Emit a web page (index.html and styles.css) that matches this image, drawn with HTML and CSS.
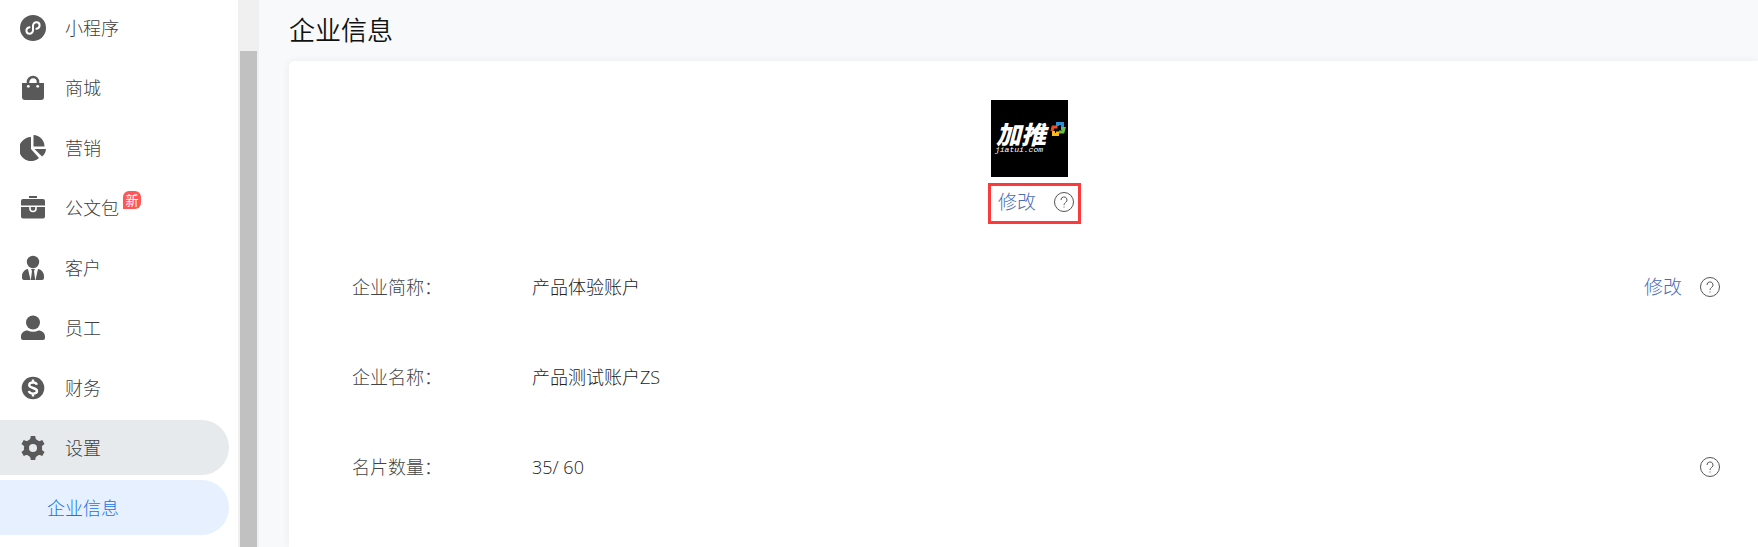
FILE: index.html
```
<!DOCTYPE html>
<html lang="zh-CN">
<head>
    <meta charset="UTF-8">
    <meta name="viewport" content="width=device-width, initial-scale=1.0">
    <title>企业信息</title>
    <link rel="stylesheet" href="styles.css">
</head>
<body>
    <div class="page">
        <nav class="sidebar">
            <a href="#" class="item">
                <svg class="icon" viewBox="0 0 26 26"><circle cx="13" cy="13" r="13" fill="#595959"/><path d="M9.600 12.200c-2.200 .4-3.200 1.800-3.200 3.300 0 1.800 1.400 3.200 3.200 3.200s3.400-1.400 3.400-3.400v-4.600c0-2 1.600-3.400 3.400-3.400s3.200 1.400 3.200 3.100c0 1.600-1 2.900-3.200 3.300" fill="none" stroke="#fff" stroke-width="2" stroke-linecap="round"/></svg>
                <span>小程序</span>
            </a>
            <a href="#" class="item">
                <svg class="icon" viewBox="0 0 26 26"><path d="M2 8h22v14a3 3 0 0 1-3 3H5a3 3 0 0 1-3-3z" fill="#595959"/><path d="M8 9V7a5 5 0 0 1 10 0v2" fill="none" stroke="#595959" stroke-width="2.600"/><circle cx="8.300" cy="11.300" r="1.400" fill="#fff"/><circle cx="17.700" cy="11.300" r="1.400" fill="#fff"/></svg>
                <span>商城</span>
            </a>
            <a href="#" class="item">
                <svg class="icon" viewBox="0 0 26 26" fill="#595959"><path d="M11 2v12l8 9A12 12 0 1 1 11 2z"/><path d="M13.500 0A11.500 11.500 0 0 1 24.500 11.500h-11z"/><path d="M14.500 14H26c-.3 3-1.500 5.500-4 7.500z"/></svg>
                <span>营销</span>
            </a>
            <a href="#" class="item">
                <svg class="icon" viewBox="0 0 26 26" fill="#595959"><path d="M9 1h8v2H9z"/><path d="M3 4h20a2 2 0 0 1 2 2v4.500H1V6a2 2 0 0 1 2-2z"/><path d="M1 12h24v9.500a2 2 0 0 1-2 2H3a2 2 0 0 1-2-2z"/><path d="M10 12v1.500a3 3 0 0 0 6 0V12" fill="none" stroke="#fff" stroke-width="1.600"/></svg>
                <span>公文包</span>
                <span class="badge">新</span>
            </a>
            <a href="#" class="item">
                <svg class="icon" viewBox="0 0 26 26" fill="#595959"><circle cx="13" cy="7" r="6.200"/><path d="M8 14l2.500 11H4a2 2 0 0 1-2-2v-2c0-3.500 2.500-6.500 6-7zM18 14l-2.500 11H22a2 2 0 0 0 2-2v-2c0-3.500-2.500-6.500-6-7z"/><path d="M11 14h4l-1 2 1.200 9h-4.400l1.200-9z"/></svg>
                <span>客户</span>
            </a>
            <a href="#" class="item">
                <svg class="icon" viewBox="0 0 26 26" fill="#595959"><circle cx="13" cy="7.500" r="7"/><path d="M7.500 15.500c3.500 1.600 7.500 1.600 11 0 3.500 0 6.500 2.500 6.500 6V23a2 2 0 0 1-2 2H3a2 2 0 0 1-2-2v-1.500c0-3.500 3-6 6.500-6z"/></svg>
                <span>员工</span>
            </a>
            <a href="#" class="item">
                <svg class="icon" viewBox="0 0 26 26"><circle cx="13" cy="13" r="11.300" fill="#595959"/><path d="M16.800 9.800c-.4-1.500-1.800-2.300-3.800-2.300-2.200 0-3.800 1-3.800 2.600 0 1.700 1.600 2.300 3.800 2.900s4 1.200 4 3-1.700 2.600-4 2.600c-2.200 0-3.700-.9-4.200-2.600M13 4.500v3M13 18.500v3" fill="none" stroke="#fff" stroke-width="2.400"/></svg>
                <span>财务</span>
            </a>
            <a href="#" class="item current">
                <svg class="icon" viewBox="0 0 26 26"><g fill="#595959"><circle cx="13" cy="13" r="9.200"/><path id="tooth" d="M10 5l.8-4h4.400L16 5v16l-.8 4h-4.400L10 21z"/><use href="#tooth" transform="rotate(60 13 13)"/><use href="#tooth" transform="rotate(120 13 13)"/></g><circle cx="13" cy="13" r="4" fill="#e6eaed"/></svg>
                <span>设置</span>
            </a>
            <a href="#" class="item sub">企业信息</a>
        </nav>
        <div class="scrollbar"><div class="thumb"></div></div>
        <main class="content">
            <h1>企业信息</h1>
            <section class="card">
                <div class="brand">
                    <svg class="logo" viewBox="0 0 77 77">
                        <rect width="77" height="77"/>
                        <text class="logo-name" x="5" y="44">加推</text>
                        <text class="logo-url" x="4" y="52">jiatui.com</text>
                        <g fill="none" stroke-width="3">
                            <path d="M66.500 26v-2.500h5V27" stroke="#2a93d5"/>
                            <path d="M70 28.500h3l-1 3.500h-4" stroke="#6abf4b"/>
                            <path d="M66.500 31.500v3h-4V31" stroke="#f9b91a"/>
                            <path d="M61 31l1-4h4.500" stroke="#e9502a"/>
                        </g>
                    </svg>
                    <div class="edit framed">
                        <a href="#">修改</a>
                        <button class="help" aria-label="帮助"><svg viewBox="0 0 20 20"><circle cx="10" cy="10" r="9.500"/><path d="M7 8a3 3 0 1 1 4.500 2.500Q10 11.500 10 13M10 14.500v1"/></svg></button>
                    </div>
                </div>
                <dl class="info">
                    <div class="row">
                        <dt>企业简称：</dt>
                        <dd>产品体验账户</dd>
                        <div class="edit">
                            <a href="#">修改</a>
                            <button class="help" aria-label="帮助"><svg viewBox="0 0 20 20"><circle cx="10" cy="10" r="9.500"/><path d="M7 8a3 3 0 1 1 4.500 2.500Q10 11.500 10 13M10 14.500v1"/></svg></button>
                        </div>
                    </div>
                    <div class="row">
                        <dt>企业名称：</dt>
                        <dd>产品测试账户ZS</dd>
                    </div>
                    <div class="row">
                        <dt>名片数量：</dt>
                        <dd>35/ 60</dd>
                        <div class="edit">
                            <button class="help" aria-label="帮助"><svg viewBox="0 0 20 20"><circle cx="10" cy="10" r="9.500"/><path d="M7 8a3 3 0 1 1 4.500 2.500Q10 11.500 10 13M10 14.500v1"/></svg></button>
                        </div>
                    </div>
                </dl>
            </section>
        </main>
    </div>
</body>
</html>
```
FILE: styles.css
```
*{
    box-sizing: border-box;
}
body{
    margin: 0;
    font-family: "Open Sans", "Noto Sans CJK SC", sans-serif;
    font-size: 18px;
    font-weight: 300;
    line-height: 26px;
    color: #222;
    background-color: #f7f9fb;
}
a{
    text-decoration: none;
}
.page{
    display: flex;
    min-height: 100vh;
}
.sidebar{
    width: 238px;
    flex-shrink: 0;
    display: flex;
    flex-direction: column;
    gap: 5px;
    background-color: white;
}
.item{
    display: flex;
    align-items: center;
    width: 229px;
    height: 55px;
    padding-left: 20px;
    border-radius: 0 28px 28px 0;
    color: #404040;
}
.icon{
    width: 26px;
    height: 26px;
    margin-right: 19px;
}
.current{
    background-color: #e6eaed;
}
.sub{
    padding-left: 47px;
    background-color: #e6f0ff;
    color: #1a73e8;
}
.badge{
    width: 18px;
    height: 18px;
    margin: 0 0 15px 4px;
    border-radius: 6px 6px 6px 0;
    background-color: #ff5757;
    color: white;
    font-size: 13px;
    font-weight: 400;
    line-height: 18px;
    text-align: center;
}
.scrollbar{
    width: 21px;
    flex-shrink: 0;
    padding: 51px 2px 0;
    display: flex;
    background-color: #f0f0f0;
}
.thumb{
    flex: 1;
    background-color: #c1c1c1;
}
.content{
    flex: 1;
    display: flex;
    flex-direction: column;
    padding-left: 30px;
}
h1{
    margin: 0;
    padding: 12px 0 13px;
    font-size: 26px;
    font-weight: 350;
    line-height: 36px;
    color: #111;
}
.card{
    flex: 1;
    padding: 39px 38px 0 63px;
    border-radius: 6px 0 0 0;
    background-color: white;
    box-shadow: 0 0 8px rgba(0, 0, 0, 0.06);
}
.brand{
    width: fit-content;
    margin: 0 auto;
    padding-right: 3px;
}
.logo{
    display: block;
    width: 77px;
    height: 77px;
    margin: 0 0 6px 3px;
}
.logo-name{
    font-size: 25px;
    font-weight: 900;
    font-style: italic;
    fill: white;
}
.logo-url{
    font-family: "Liberation Mono", monospace;
    font-size: 8px;
    font-style: italic;
    fill: white;
}
.edit{
    display: flex;
    align-items: center;
    gap: 18px;
    margin-left: auto;
}
.edit a{
    font-size: 19px;
    color: #4a6cb8;
}
.framed{
    height: 41px;
    padding: 0 4px 3px 7px;
    border: 3px solid #fb3b3b;
}
.help{
    width: 20px;
    height: 20px;
    padding: 0;
    border: none;
    background: none;
}
.help svg{
    display: block;
    fill: none;
    stroke: #555;
}
.info{
    margin: 18px 0 0;
}
.row{
    display: flex;
    align-items: center;
    height: 90px;
}
dt{
    width: 180px;
    color: #444;
}
dd{
    margin: 0;
}
```
